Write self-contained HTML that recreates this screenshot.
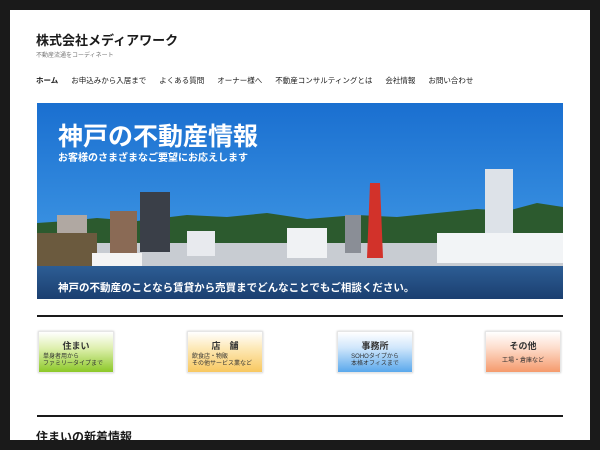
<!DOCTYPE html>
<html><head><meta charset="utf-8"><style>
*{margin:0;padding:0;box-sizing:border-box}
body{width:600px;height:450px;background:#1a1a1a;position:relative;overflow:hidden;font-family:"Liberation Sans","Noto Sans CJK JP",sans-serif}
.page{position:absolute;left:10px;top:10px;width:580px;height:430px;background:#fff}
.t{position:absolute;white-space:nowrap}
.box{position:absolute;top:331px;width:76px;height:42px;border:1px solid #e6e6e6;box-shadow:0 0 2px #ccc;font-size:6px;color:#333;text-align:center}
.box b{display:block;font-size:9px;margin-top:7px;font-weight:bold;color:#333}
.box i{font-style:normal;display:block;line-height:7px;margin-top:2px;text-align:left;padding-left:4px}
</style></head><body>
<div class="page"></div>
<div class="t" style="left:36px;top:30px;font-size:13px;font-weight:bold;color:#1a1a1a">株式会社メディアワーク</div>
<div class="t" style="left:36px;top:50px;font-size:6px;color:#777">不動産流通をコーディネート</div>
<div class="t" style="left:36px;top:75px;font-size:7.5px;color:#1a1a1a">
<b>ホーム</b><span style="margin-left:13px">お申込みから入居まで</span><span style="margin-left:13px">よくある質問</span><span style="margin-left:13px">オーナー様へ</span><span style="margin-left:13px">不動産コンサルティングとは</span><span style="margin-left:13px">会社情報</span><span style="margin-left:13px">お問い合わせ</span></div>

<svg style="position:absolute;left:37px;top:103px" width="526" height="196" viewBox="0 0 526 196">
<defs><linearGradient id="sky" x1="0" y1="0" x2="0" y2="1"><stop offset="0" stop-color="#1a6fd0"/><stop offset="1" stop-color="#4aa3ea"/></linearGradient>
<linearGradient id="sea" x1="0" y1="0" x2="0" y2="1"><stop offset="0" stop-color="#2d5d94"/><stop offset="1" stop-color="#1b3f70"/></linearGradient></defs>
<rect width="526" height="196" fill="url(#sky)"/>
<path d="M0 120 L30 118 L60 115 L100 118 L150 112 L190 114 L230 110 L270 116 L320 112 L360 114 L400 110 L440 106 L470 108 L500 100 L526 104 L526 150 L0 150Z" fill="#2c5a2e"/>
<rect x="0" y="140" width="526" height="25" fill="#c8ccd2"/>
<rect x="103" y="89" width="30" height="60" fill="#3a3f48"/>
<rect x="73" y="108" width="27" height="42" fill="#8a6a55"/>
<rect x="20" y="112" width="30" height="35" fill="#b0a8a2"/>
<rect x="150" y="128" width="28" height="25" fill="#e8eaee"/>
<rect x="250" y="125" width="40" height="30" fill="#f0f2f4"/>
<rect x="308" y="112" width="16" height="38" fill="#8a8e96"/>
<rect x="448" y="66" width="28" height="75" fill="#dde2e8"/>
<path d="M333 80 L343 80 L346 155 L330 155Z" fill="#d2322a"/>
<rect x="0" y="130" width="60" height="35" fill="#6b5a3e"/>
<rect x="400" y="130" width="126" height="30" fill="#f2f4f6"/>
<rect x="55" y="150" width="50" height="15" fill="#f4f4f4"/>
<rect x="0" y="163" width="526" height="33" fill="url(#sea)"/>
<text x="21" y="42" font-size="25" font-weight="bold" fill="#fff" font-family="Noto Sans CJK JP">神戸の不動産情報</text>
<text x="21" y="58" font-size="10" font-weight="bold" fill="#fff" font-family="Noto Sans CJK JP">お客様のさまざまなご要望にお応えします</text>
<text x="21" y="188" font-size="10.5" font-weight="bold" fill="#fff" font-family="Noto Sans CJK JP">神戸の不動産のことなら賃貸から売買までどんなことでもご相談ください。</text>
</svg>

<div style="position:absolute;left:37px;top:315px;width:526px;height:2px;background:#1a1a1a"></div>
<div class="box" style="left:38px;background:linear-gradient(#fff,#dff0b0 40%,#8cc828)"><b>住まい</b><i>単身者用から<br>ファミリータイプまで</i></div>
<div class="box" style="left:187px;background:linear-gradient(#fff,#fde9b8 40%,#f8c860)"><b>店　舗</b><i>飲食店・物販<br>その他サービス業など</i></div>
<div class="box" style="left:337px;background:linear-gradient(#fff,#cfe6fb 40%,#5aa8ec)"><b>事務所</b><i style="text-align:center;padding:0">SOHOタイプから<br>本格オフィスまで</i></div>
<div class="box" style="left:485px;background:linear-gradient(#fff,#fddccb 40%,#f59a6c)"><b>その他</b><i style="text-align:center;padding:0;margin-top:6px">工場・倉庫など</i></div>
<div style="position:absolute;left:37px;top:415px;width:526px;height:2px;background:#1a1a1a"></div>
<div class="t" style="left:36px;top:428px;font-size:12px;font-weight:bold;color:#1a1a1a">住まいの新着情報</div>
<div style="position:absolute;left:0;top:440px;width:600px;height:10px;background:#1a1a1a"></div>
</body></html>
